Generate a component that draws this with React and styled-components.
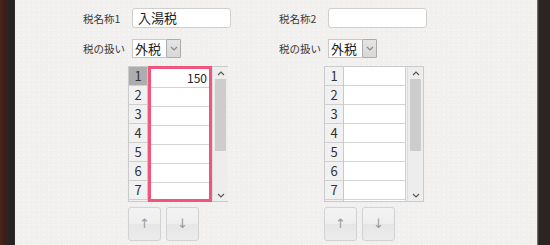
import React from "react";
import styled, { createGlobalStyle } from "styled-components";

const Global = createGlobalStyle`
  html, body { margin: 0; padding: 0; }
  body {
    width: 550px; height: 245px; overflow: hidden;
    font-family: "Noto Sans CJK JP", "Noto Sans", sans-serif;
    background: #f2f1ef;
  }
`;

const Page = styled.div`
  display: flex;
  width: 550px;
  height: 245px;
`;

const LeftFrame = styled.div`
  width: 15px;
  flex: none;
  background: linear-gradient(90deg, #4a2418 0px, #3b1c12 6px, #2b2524 7px, #242120 14px, #3a3634 15px);
`;

const RightFrame = styled.div`
  width: 13px;
  flex: none;
  background: linear-gradient(90deg, #9a9794 0px, #4a4542 1px, #2a2523 2px, #2b2422 13px);
`;

const Paper = styled.div`
  flex: 1;
  background-color: #f1f0ee;
  background-image:
    radial-gradient(rgba(0,0,0,0.012) 1px, transparent 1px),
    radial-gradient(rgba(255,255,255,0.35) 1px, transparent 1px);
  background-size: 3px 3px, 5px 5px;
  background-position: 0 0, 1px 2px;
  padding: 8px 0 0 68px;
  display: flex;
`;

const Column = styled.div`
  width: 196px;
  display: flex;
  flex-direction: column;
`;

const FieldRow = styled.div`
  display: flex;
  align-items: center;
  height: ${(p) => p.$h}px;
  margin-bottom: ${(p) => p.$mb}px;
`;

const Label = styled.div`
  width: 49px;
  flex: none;
  font-size: 10.5px;
  color: #3a3a3a;
  white-space: nowrap;
`;

const TextInput = styled.div`
  box-sizing: border-box;
  width: 99px;
  height: 20px;
  background: #fff;
  border: 1px solid #cfcfcf;
  border-radius: 3px;
  font-size: 13px;
  line-height: 18px;
  padding-left: 5px;
  color: #222;
`;

const Select = styled.div`
  display: flex;
  height: 19px;
  width: 49px;
  box-sizing: border-box;
`;

const SelectValue = styled.div`
  flex: 1;
  background: #fff;
  border: 1px solid #c9c9c9;
  border-right: none;
  font-size: 13px;
  line-height: 17px;
  padding-left: 2px;
  color: #222;
`;

const SelectButton = styled.div`
  width: 15px;
  box-sizing: border-box;
  background: linear-gradient(#e4e4e4, #d8d8d8);
  border: 1px solid #acacac;
  border-radius: 1px;
  display: flex;
  align-items: center;
  justify-content: center;
`;

const Indented = styled.div`
  margin-left: 45px;
`;

const Grid = styled.div`
  width: 100px;
  height: 136px;
  box-sizing: border-box;
  border: 1px solid #cbcbcb;
  background: #f0f0f0;
  display: flex;
  margin-bottom: 5px;
`;

const HeaderCol = styled.div`
  width: 19px;
  flex: none;
  overflow: hidden;
  border-right: 1px solid #c9c9c9;
  box-sizing: border-box;
`;

const HeaderCell = styled.div`
  height: 18px;
  border-bottom: 1px solid #cfcfcf;
  background: ${(p) => (p.$active ? "#adadad" : "#f1f1f1")};
  font-size: 13px;
  line-height: 18px;
  text-align: center;
  color: #333;
`;

const DataCol = styled.div`
  width: ${(p) => (p.$selected ? 64 : 62)}px;
  flex: none;
  overflow: hidden;
  box-sizing: border-box;
  border: ${(p) => (p.$selected ? "3px solid #f0567b" : "none")};
  border-right: ${(p) => (p.$selected ? "3px solid #f0567b" : "1px solid #cfcfcf")};
  margin-top: ${(p) => (p.$selected ? -1 : 0)}px;
  height: ${(p) => (p.$selected ? 136 : 134)}px;
`;

const DataCell = styled.div`
  height: 18px;
  background: #fff;
  border-bottom: 1px solid ${(p) => (p.$focus ? "#f6c8aa" : "#d3d3d3")};
  font-size: 12px;
  line-height: 18px;
  text-align: right;
  padding-right: 2px;
  color: #222;
`;

const Scrollbar = styled.div`
  margin-left: auto;
  width: 15px;
  flex: none;
  background: #ededed;
  border-left: 1px solid #dedede;
  display: flex;
  flex-direction: column;
  align-items: center;
`;

const ScrollArrow = styled.div`
  height: 12px;
  display: flex;
  align-items: center;
  justify-content: center;
`;

const Thumb = styled.div`
  width: 11px;
  height: 72px;
  background: #cdcdcd;
`;

const Spacer = styled.div`
  flex: 1;
`;

const Buttons = styled.div`
  display: flex;
  gap: 5px;
`;

const ArrowButton = styled.div`
  width: 33px;
  height: 34px;
  box-sizing: border-box;
  border: 1px solid #d2d2d2;
  border-radius: 3px;
  background: linear-gradient(#f3f3f3 0%, #efefef 48%, #e6e6e6 50%, #ececec 100%);
  display: flex;
  align-items: center;
  justify-content: center;
  font-family: "DejaVu Sans", sans-serif;
  font-size: 13px;
  line-height: 1.3;
  color: #9a9a9a;
`;

const Chevron = ({ up, color = "#777" }) => (
  <svg width="8" height="5" viewBox="0 0 8 5">
    <polyline
      points={up ? "1,4 4,1 7,4" : "1,1 4,4 7,1"}
      fill="none"
      stroke={color}
      strokeWidth="1.1"
    />
  </svg>
);

const rows = [1, 2, 3, 4, 5, 6, 7, 8];

function TaxColumn({ index, name, values, selected }) {
  return (
    <Column>
      <FieldRow $h={20} $mb={11}>
        <Label>税名称{index}</Label>
        <TextInput>{name}</TextInput>
      </FieldRow>
      <FieldRow $h={19} $mb={8}>
        <Label>税の扱い</Label>
        <Select>
          <SelectValue>外税</SelectValue>
          <SelectButton>
            <Chevron color="#888" />
          </SelectButton>
        </Select>
      </FieldRow>
      <Indented>
        <Grid>
          <HeaderCol>
            {rows.map((r) => (
              <HeaderCell key={r} $active={selected && r === 1}>
                {r}
              </HeaderCell>
            ))}
          </HeaderCol>
          <DataCol $selected={selected}>
            {rows.map((r, i) => (
              <DataCell key={r} $focus={selected && i === 0}>
                {values[i] || ""}
              </DataCell>
            ))}
          </DataCol>
          <Scrollbar>
            <ScrollArrow>
              <Chevron up color="#555" />
            </ScrollArrow>
            <Thumb />
            <Spacer />
            <ScrollArrow>
              <Chevron color="#555" />
            </ScrollArrow>
          </Scrollbar>
        </Grid>
        <Buttons>
          <ArrowButton>↑</ArrowButton>
          <ArrowButton>↓</ArrowButton>
        </Buttons>
      </Indented>
    </Column>
  );
}

export default function App() {
  return (
    <Page>
      <Global />
      <LeftFrame />
      <Paper>
        <TaxColumn index={1} name="入湯税" values={["150"]} selected />
        <TaxColumn index={2} name="" values={[]} />
      </Paper>
      <RightFrame />
    </Page>
  );
}
